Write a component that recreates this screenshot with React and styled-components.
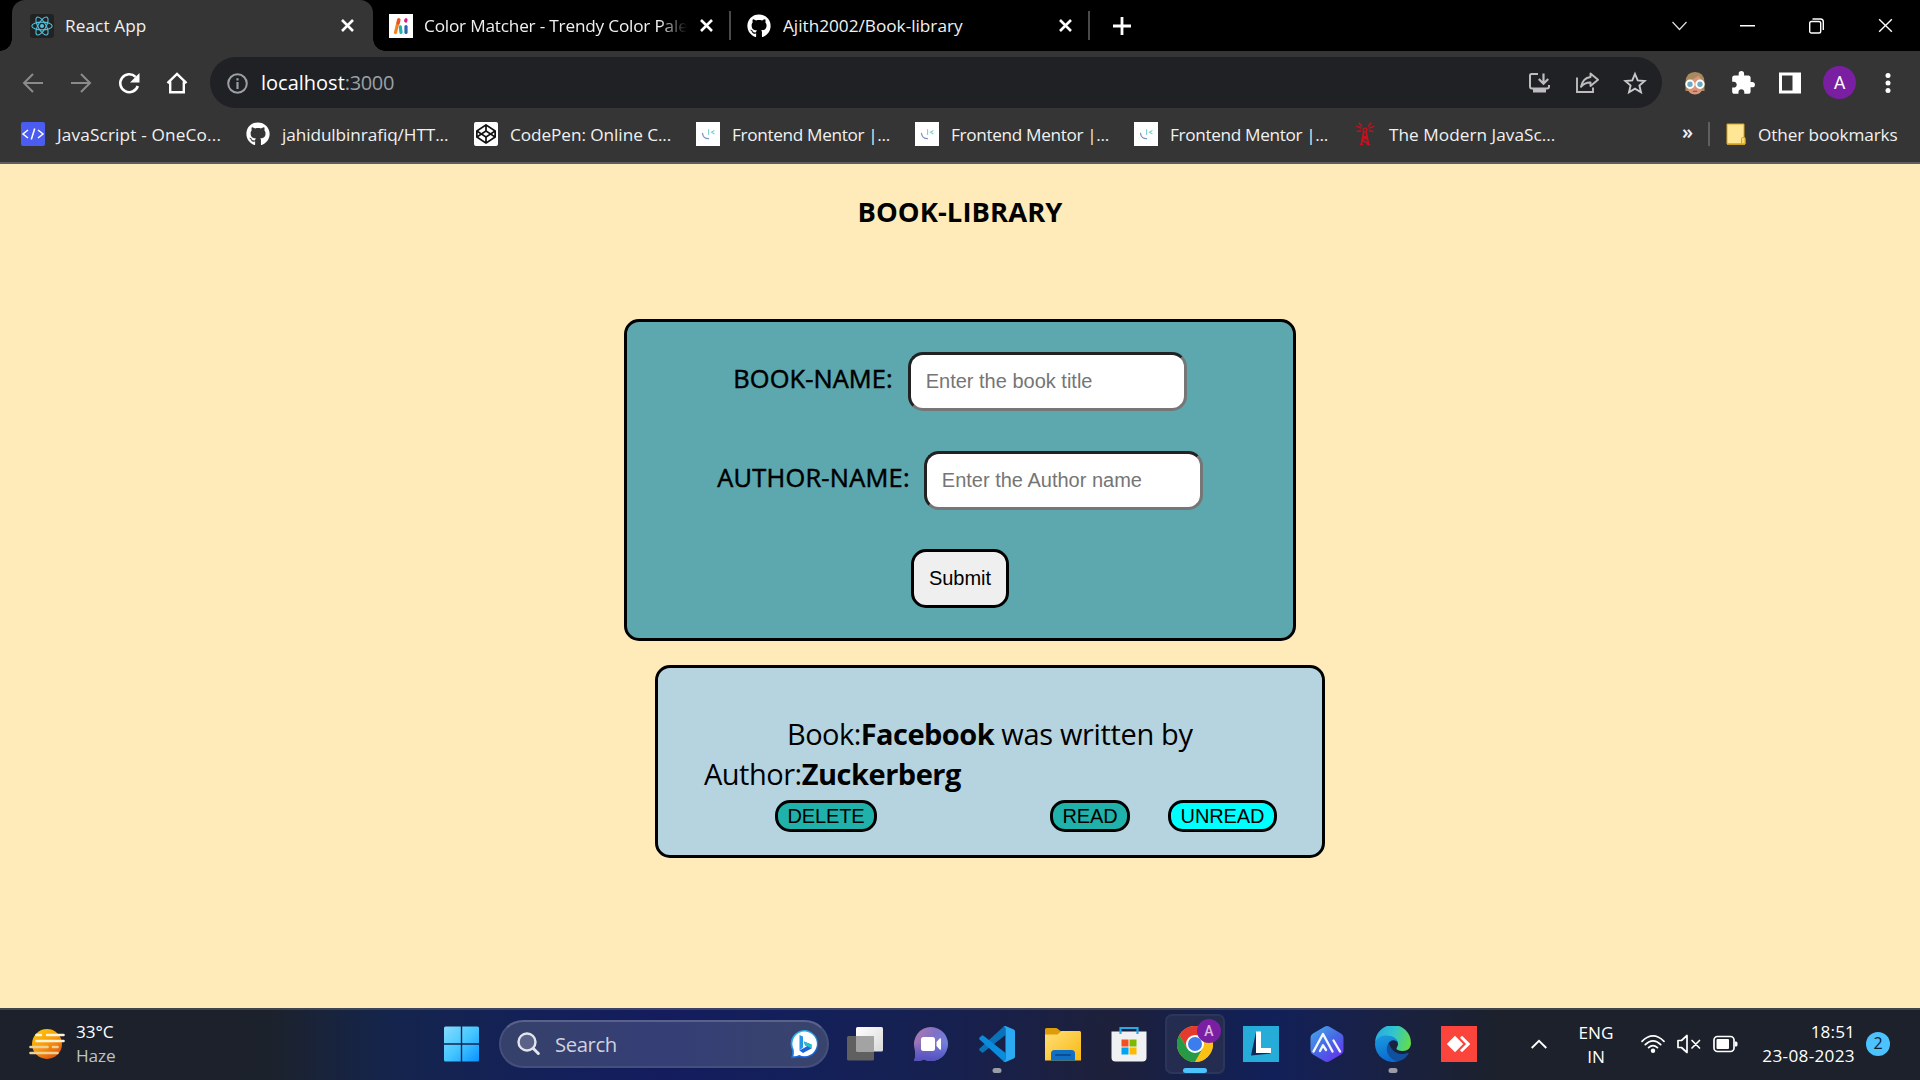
import React from "react";
import styled, { createGlobalStyle } from "styled-components";
import { FaGithub, FaCodepen } from "react-icons/fa";
import { MdExtension } from "react-icons/md";

const GlobalStyle = createGlobalStyle`
  * { box-sizing: border-box; }
  body {
    margin: 0;
    overflow: hidden;
    background: #ffeaba;
    font-family: "Open Sans", "Noto Sans", sans-serif;
  }
  svg { display: block; flex: none; }
`;

const Screen = styled.div`
  width: 1920px;
  height: 1080px;
  display: flex;
  flex-direction: column;
`;

const Label = styled.span`
  font-size: ${(p) => p.$size || 17.2}px;
  font-weight: ${(p) => p.$weight || 400};
  letter-spacing: ${(p) => p.$track || 0}px;
  line-height: 24px;
  white-space: nowrap;
  color: ${(p) => p.$color || "#f1f1f1"};
`;

/* ---------- browser: tab strip ---------- */

const TabStrip = styled.header`
  height: 51px;
  display: flex;
  align-items: center;
  background: #000;
  padding-left: 12px;
`;

const Tab = styled.div`
  position: relative;
  width: ${(p) => p.$width}px;
  height: 51px;
  display: flex;
  align-items: center;
  padding: 0 ${(p) => p.$right}px 0 ${(p) => p.$left}px;
  border-radius: 13px 13px 0 0;
  background: ${(p) => (p.$active ? "#353535" : "transparent")};

  &::before,
  &::after {
    content: "";
    display: ${(p) => (p.$active ? "block" : "none")};
    position: absolute;
    bottom: 0;
    width: 12px;
    height: 12px;
  }
  &::before {
    left: -12px;
    background: radial-gradient(circle at 0 0, transparent 11.5px, #353535 12px);
  }
  &::after {
    right: -12px;
    background: radial-gradient(circle at 100% 0, transparent 11.5px, #353535 12px);
  }
`;

const TabTitle = styled(Label)`
  flex: 1;
  min-width: 0;
  margin-left: ${(p) => p.$gap || 11}px;
  overflow: hidden;
  ${(p) => p.$fade && "mask-image: linear-gradient(90deg, #000 235px, transparent 263px);"}
`;

const Divider = styled.i`
  width: 2px;
  height: ${(p) => p.$height}px;
  background: ${(p) => p.$color || "#4a4a4a"};
`;

const NewTab = styled.button`
  width: 62px;
  height: 51px;
  padding: 0 0 0 22px;
  border: 0;
  background: none;
`;

const WindowControls = styled.div`
  margin-left: auto;
  height: 43px;
  display: flex;
  align-items: center;
  gap: 53.8px;
  padding-right: 27px;
`;

/* ---------- browser: toolbar ---------- */

const Toolbar = styled.div`
  height: 63px;
  display: flex;
  align-items: center;
  background: #353535;
`;

const NavButtons = styled.nav`
  width: 210px;
  display: flex;
  gap: 24px;
  padding-left: 21px;
`;

const Omnibox = styled.div`
  width: 1452px;
  height: 51px;
  display: flex;
  align-items: center;
  padding: 0 15px 0 15px;
  border-radius: 26px;
  background: #202124;
`;

const Url = styled.div`
  flex: 1;
  display: flex;
  margin-left: 12px;
`;

const OmniActions = styled.div`
  display: flex;
  gap: 24px;
`;

const Extensions = styled.div`
  display: flex;
  align-items: center;
  gap: 23px;
  padding-left: 21px;
`;

const Avatar = styled.div`
  width: 33px;
  height: 33px;
  margin: 0 -3px 0 -1px;
  border-radius: 50%;
  background: #7b1fa2;
  color: #fff;
  font: 400 18px/33px Roboto, sans-serif;
  text-align: center;
`;

/* ---------- browser: bookmarks ---------- */

const BookmarksBar = styled.div`
  height: 50px;
  display: flex;
  align-items: center;
  padding: 0 20px 8px 21px;
  background: #353535;
  border-bottom: 2px solid #5f5f5f;
`;

const Bookmark = styled.div`
  width: ${(p) => p.$width}px;
  display: flex;
  align-items: center;
  gap: 12px;
  padding-left: ${(p) => p.$inset || 0}px;
`;

const BookmarkName = styled(Label)`
  padding-top: 1px;
  line-height: 25px;
`;

const More = styled(Label)`
  margin: 0 15px 4px auto;
  font-weight: 600;
  font-size: 20px;
`;

/* ---------- page ---------- */

const Page = styled.main`
  height: 844px;
  display: flex;
  flex-direction: column;
  align-items: center;
  background: #ffeaba;
`;

const Title = styled.h1`
  margin: 28px 0 87px;
  font-size: 27.4px;
  line-height: 40px;
  font-weight: 700;
  letter-spacing: 0.08px;
  color: #000;
`;

const Form = styled.form`
  width: 672px;
  height: 322px;
  display: flex;
  flex-direction: column;
  align-items: center;
  gap: 40px;
  padding-top: 30px;
  border: 3px solid #000;
  border-radius: 15px;
  background: #5da7ae;
`;

const Field = styled.label`
  display: flex;
  align-items: center;
  gap: ${(p) => p.$gap}px;
`;

const FieldName = styled.span`
  padding-bottom: 8px;
  font-size: 25.4px;
  line-height: 34px;
  letter-spacing: ${(p) => p.$track}px;
  color: #000;
  -webkit-text-stroke: 0.5px #000;
`;

const Input = styled.input`
  width: 279px;
  height: 59px;
  padding: 0 15px;
  border: 3px solid;
  border-color: #222 #767676 #767676 #222;
  border-radius: 15px;
  background: #fff;
  font: 20px "Liberation Sans", Arial, sans-serif;
  outline: 0;
  &::placeholder { color: #757575; opacity: 1; }
`;

const Submit = styled.button`
  width: 98px;
  height: 59px;
  margin-top: -1px;
  padding: 0;
  border: 3px solid #000;
  border-radius: 15px;
  background: #efefef;
  color: #000;
  font: 20px "Liberation Sans", Arial, sans-serif;
`;

const Card = styled.section`
  width: 670px;
  height: 193px;
  margin: 24px 0 0 60px;
  padding: 46px 45px 0 46px;
  border: 3px solid #000;
  border-radius: 15px;
  background: #b6d4e0;
`;

const Sentence = styled.p`
  margin: 0;
  text-indent: ${(p) => p.$indent || 0}px;
  font-size: 29px;
  line-height: 40px;
  letter-spacing: ${(p) => p.$track}px;
  color: #000;
`;

const Run = styled.span`
  font-weight: ${(p) => p.$weight || 400};
  letter-spacing: ${(p) => p.$track}px;
`;

const CardActions = styled.div`
  display: flex;
  margin-top: 6px;
  padding-left: 71px;
`;

const Pill = styled.button`
  width: ${(p) => p.$width}px;
  height: 32px;
  margin-right: ${(p) => p.$after || 0}px;
  padding: 0;
  border: 3px solid #000;
  border-radius: 15px;
  background: ${(p) => p.$bg};
  color: #000;
  font: 20px/25px "Liberation Sans", Arial, sans-serif;
  letter-spacing: -0.1px;
`;

/* ---------- taskbar ---------- */

const Taskbar = styled.footer`
  height: 72px;
  display: flex;
  align-items: center;
  padding-bottom: 2px;
  border-top: 2px solid rgba(110, 110, 110, 0.45);
  background: linear-gradient(90deg, #1c212b 0, #1c222c 270px, #14244c 390px, #13205a 560px, #141c5e 660px,
    #13205a 800px, #17204e 960px, #1e203a 1110px, #15204e 1210px, #12205a 1270px, #1a2140 1400px, #1c212b 1500px);
  background-origin: border-box;
`;

const Weather = styled.div`
  width: 443px;
  display: flex;
  align-items: center;
  gap: 10px;
  padding-left: 29px;
`;

const Stack = styled.div`
  display: flex;
  flex-direction: column;
  align-items: ${(p) => p.$align || "flex-start"};
`;

const SearchBox = styled.div`
  width: 330px;
  height: 48px;
  display: flex;
  align-items: center;
  gap: 15px;
  margin: 0 6px 0 20px;
  padding: 0 7px 0 16px;
  border: 2px solid #454f7b;
  border-top-color: #5a628c;
  border-radius: 24px;
  background: linear-gradient(90deg, #35416a, #353e76 50%, #38446c);
`;

const SearchText = styled(Label)`
  flex: 1;
`;

const Apps = styled.div`
  display: flex;
  gap: 6px;
  margin-right: 42px;
`;

const AppSlot = styled.div`
  position: relative;
  width: 60px;
  height: 60px;
  display: grid;
  place-items: center;
  border-radius: 7px;
  border: 2px solid ${(p) => (p.$active ? "#2c355a" : "transparent")};
  background: ${(p) => (p.$active ? "#242c50" : "transparent")};

  &::after {
    content: "";
    display: ${(p) => (p.$running || p.$active ? "block" : "none")};
    position: absolute;
    left: 50%;
    bottom: -1px;
    width: ${(p) => (p.$active ? 24 : 9)}px;
    height: 5px;
    border-radius: 3px;
    transform: translateX(-50%);
    background: ${(p) => (p.$active ? "#4cc2ff" : "#9a9ca8")};
  }
`;

const ProfileBadge = styled.span`
  position: absolute;
  top: 3px;
  right: 2px;
  width: 24px;
  height: 24px;
  border-radius: 50%;
  background: #7b1fa2;
  color: #d9b8e4;
  font: 500 14px/25px Roboto, sans-serif;
  text-align: center;
`;

const Tray = styled.div`
  flex: 1;
  display: flex;
  align-items: center;
`;

const Language = styled(Stack)`
  width: 60px;
  margin: 0 15px 0 19px;
  padding-top: 1px;
`;

const Status = styled.div`
  display: flex;
  align-items: center;
  gap: 12px;
`;

const Clock = styled(Stack)`
  width: 104px;
  margin: 0 11px 0 13px;
`;

const Count = styled.div`
  width: 24px;
  height: 24px;
  border-radius: 50%;
  background: #4cc2ff;
  color: #10202c;
  font-size: 16px;
  line-height: 23px;
  text-align: center;
`;

/* ---------- icons ---------- */

const Close = ({ size = 13, w = 2.6, color = "#fff" }) => (
  <svg width={size} height={size} viewBox="0 0 13 13" stroke={color} strokeWidth={w} fill="none">
    <path d="M1 1 12 12M12 1 1 12" />
  </svg>
);

const ReactIcon = () => (
  <svg width="24" height="24" viewBox="0 0 24 24" fill="none" stroke="#53c1de" strokeWidth="1.1">
    <rect width="24" height="24" rx="3" fill="#222" stroke="none" />
    <ellipse cx="12" cy="12" rx="10.2" ry="3.9" />
    <ellipse cx="12" cy="12" rx="10.2" ry="3.9" transform="rotate(60 12 12)" />
    <ellipse cx="12" cy="12" rx="10.2" ry="3.9" transform="rotate(120 12 12)" />
    <circle cx="12" cy="12" r="2" fill="#53c1de" stroke="none" />
  </svg>
);

const MatcherIcon = () => (
  <svg width="24" height="24" viewBox="0 0 24 24" fill="none" strokeLinecap="round" strokeWidth="3.2">
    <rect width="24" height="24" fill="#fff" />
    <path d="M9.500 6 6.500 18.500" stroke="#f58220" />
    <path d="M10 5.800 9.200 9" stroke="#e8502f" />
    <path d="M11.300 12.800 12 18.500" stroke="#1fb5a8" />
    <path d="M17 12.500V18.500" stroke="#2d63b4" />
    <path d="M17 5.800 16.700 7" stroke="#e6197f" />
  </svg>
);

const CodeIcon = () => (
  <svg width="24" height="24" viewBox="0 0 24 24" fill="none" stroke="#fff" strokeWidth="1.5">
    <rect width="24" height="24" rx="2" fill="#4b5cf0" stroke="none" />
    <path d="M7 8 2 12l5 4M17 8l5 4-5 4M13.7 6.5l-3.4 11" />
  </svg>
);

const PenBox = styled.div`
  width: 24px;
  height: 24px;
  display: grid;
  place-items: center;
  flex: none;
  border-radius: 2px;
  background: #fff;
`;

const MentorIcon = () => (
  <svg width="24" height="24" viewBox="0 0 24 24" fill="none" strokeLinecap="round">
    <rect width="24" height="24" fill="#fff" />
    <path d="M6.5 11.5C7 14.7 9 16.7 12.5 16.7" stroke="#7d8fc9" strokeWidth="1.3" />
    <path d="M12.6 7.5v5M18 8.7l-2.5 1.6 2.5 1.5" stroke="#7ccfd2" strokeWidth="1.1" />
  </svg>
);

const TowerIcon = () => (
  <svg width="24" height="24" viewBox="-0.700 0 24 24" fill="none" stroke="#c8101f" strokeWidth="1.400">
    <path d="M10 10 7.500 22.500M12.500 10 15 22.500M9.500 14l4.200 3.500M13 14l-4.500 4M8.500 18l5.800 3.500M6 22.500h3.500M13 22.500h3.500" strokeWidth="1.700" />
    <circle cx="11.300" cy="8" r="1.900" />
    <path d="M8 6.300 2.500 4.200M8.200 4.500 5.200.8M14.500 4.500 17.500.8M15 6.300 20.500 4.200M7.500 8.800 3 9.500M15.200 8.800 19.500 9.500" />
  </svg>
);

const FolderMark = () => (
  <svg width="20" height="24" viewBox="0 0 20 24">
    <path d="M1 2h17v14l1 1v5H1z" fill="#ffe694" stroke="#d9a520" strokeWidth="1" />
    <path d="M15.5 22v-5.5q0-1 1-1h2.5V22z" fill="#ffd966" stroke="#d9a520" strokeWidth="1" />
    <path d="M1 22h18" stroke="#e0ac1c" strokeWidth="1.5" />
  </svg>
);

const NavIcons = () => (
  <NavButtons>
    <svg width="24" height="24" viewBox="0 0 24 24" fill="none" stroke="#8b8b8b" strokeWidth="2">
      <path d="M22 12H3.5M12 3 3 12l9 9" />
    </svg>
    <svg width="24" height="24" viewBox="0 0 24 24" fill="none" stroke="#8b8b8b" strokeWidth="2">
      <path d="M2 12h18.5M12 3l9 9-9 9" />
    </svg>
    <svg width="24" height="24" viewBox="0 0 24 24" fill="none" stroke="#fff" strokeWidth="2.6">
      <path d="M20.8 15A9 9 0 1 1 18.6 5.8" />
      <path d="M22.5 2v9.5H13z" fill="#fff" stroke="none" />
    </svg>
    <svg width="24" height="24" viewBox="0 0 24 24" fill="none" stroke="#fff" strokeWidth="2.4">
      <path d="M2.5 12.2 12 3l9.5 9.2M5.2 10.5V21.3h13.6V10.5" />
    </svg>
  </NavButtons>
);

const InfoIcon = () => (
  <svg width="24" height="24" viewBox="0 0 24 24" fill="none" stroke="#9aa0a6" strokeWidth="2">
    <circle cx="12.5" cy="12.5" r="9.3" />
    <path d="M12.5 11v7M12.5 7.2v2.3" strokeWidth="2.2" />
  </svg>
);

const InstallIcon = () => (
  <svg width="24" height="24" viewBox="0 0 24 24" fill="none" stroke="#bdbdbd" strokeWidth="2">
    <path d="M11 3H4.5Q3 3 3 4.500V15.5Q3 17.500 5 17.500H20Q22 17.500 22 15.500V14" />
    <path d="M16.500 2.500v9M11.800 8l4.700 4.700L21.200 8" strokeWidth="2.2" />
    <path d="M6 18h13v3.500H6z" fill="#bdbdbd" stroke="none" />
  </svg>
);

const ShareIcon = () => (
  <svg width="24" height="24" viewBox="0 0 24 24" fill="none" stroke="#bdbdbd" strokeWidth="1.9">
    <path d="M2 6.500V21H18V16.500" />
    <path d="M15.500 2.500 23 8.800 15.500 15V11.500C11 11.300 8.500 12.800 6 15.800 7 10.500 9.800 6.800 15.500 6z" strokeLinejoin="round" />
  </svg>
);

const StarIcon = () => (
  <svg width="24" height="24" viewBox="0 0 24 24" fill="none" stroke="#c9c9c9" strokeWidth="1.9">
    <path d="m12 3 2.700 6.400 6.900.6-5.200 4.500 1.600 6.800L12 17.700l-6 3.600 1.600-6.800L2.400 10l6.900-.6z" />
  </svg>
);

const FaceIcon = () => (
  <svg width="24" height="24" viewBox="0 0 24 24">
    <path d="M2.500 11Q3 1 12 1T21.500 11V20H2.500z" fill="#a98a5e" />
    <path d="M4.500 9.500q7-1 11-5 2 3.500 4 5v7q-1 7-7.500 7T4.500 16.500z" fill="#d9967a" />
    <circle cx="7" cy="13.300" r="3.700" fill="#6fa9bd" stroke="#fff" strokeWidth="2" />
    <circle cx="17" cy="13.300" r="3.700" fill="#6fa9bd" stroke="#fff" strokeWidth="2" />
    <path d="M9.800 20.300h4.400" stroke="#b94d44" strokeWidth="1.300" />
  </svg>
);

const SidePanelIcon = () => (
  <svg width="22" height="22" viewBox="0 0 22 22">
    <path fill="#fff" fillRule="evenodd" d="M0 .5h22v21H0zM3 3.500v15h10.500v-15z" />
  </svg>
);

const HazeIcon = () => (
  <svg width="37" height="32" viewBox="0 0 37 32">
    <defs>
      <linearGradient id="sun" x1="0" y1="0" x2="0.700" y2="1">
        <stop offset="0" stopColor="#ffcf0a" />
        <stop offset="0.550" stopColor="#f79a0c" />
        <stop offset="1" stopColor="#e2540f" />
      </linearGradient>
    </defs>
    <circle cx="18" cy="16" r="15" fill="url(#sun)" />
    <g stroke="#fff3d6" strokeWidth="2.600" strokeLinecap="round">
      <path d="M7.500 7H12M18 7H34.500M7.500 13H34.500" />
      <path d="M1.500 19H18.500M24 19H28.500M1.500 25H28.500" stroke="#ecd09a" />
    </g>
  </svg>
);

const WindowsLogo = () => (
  <svg width="36" height="36" viewBox="0 0 36 36">
    <defs>
      <linearGradient id="win" x1="0" y1="0" x2="1" y2="1">
        <stop offset="0" stopColor="#86dcfd" />
        <stop offset="0.500" stopColor="#45c8ff" />
        <stop offset="1" stopColor="#0a92ff" />
      </linearGradient>
    </defs>
    <path fill="url(#win)" d="M2.500.5H17.800V17.200H1V2Q1 .5 2.500 .5zM19.200.5H34.500Q36 .5 36 2V17.200H19.200zM1 18.700H17.800V35.500H2.500Q1 35.500 1 34zM19.200 18.700H36V34Q36 35.500 34.500 35.500H19.200z" />
  </svg>
);

const SearchIcon = () => (
  <svg width="23" height="24" viewBox="0 0 23 24" fill="none" stroke="#e3e5ec" strokeWidth="2.400" strokeLinecap="round">
    <circle cx="10" cy="10" r="8.500" fill="#5a6287" />
    <path d="m16.300 16.500 5 5" strokeWidth="3" />
  </svg>
);

const BingIcon = () => (
  <svg width="30" height="30" viewBox="0 0 30 30">
    <defs>
      <linearGradient id="bing" x1="0" y1="0" x2="0.400" y2="1">
        <stop offset="0" stopColor="#28c4ee" />
        <stop offset="1" stopColor="#1760dc" />
      </linearGradient>
    </defs>
    <path d="M15 1A14 14 0 1 1 9 28Q5 29.500 1 29 2.500 26 2.200 21.500A14 14 0 0 1 15 1z" fill="url(#bing)" />
    <path d="M15 2.600A12.300 12.300 0 1 1 9.300 26Q6 27.600 3.300 27.300 4.200 25 3.700 20.500A12.300 12.300 0 0 1 15 2.600z" fill="#fff" />
    <path d="M9.500 6 13 7.500V18.500L9.500 21.500z" fill="#2296e8" />
    <path d="M9.500 21.500 17 17.200l-2-1-1.200-3.700 7.700 3v4L13 24z" fill="#1f62df" />
    <path d="m13.800 12.500 7.700 3v4L17 17.200l-2-1z" fill="#25c2c4" />
  </svg>
);

const TaskViewIcon = () => (
  <svg width="36" height="36" viewBox="0 0 36 36">
    <defs>
      <linearGradient id="tv" x1="0" y1="0" x2="1" y2="1">
        <stop offset="0" stopColor="#fff" />
        <stop offset="1" stopColor="#d9d9d9" />
      </linearGradient>
    </defs>
    <rect x="0" y="10" width="27" height="24.500" rx="1.500" fill="#606060" />
    <rect x="9" y="1" width="27" height="24.500" rx="1.500" fill="url(#tv)" />
    <path d="M9 10H27V25.500H10.500Q9 25.500 9 24z" fill="#a3a3a3" />
  </svg>
);

const ChatIcon = () => (
  <svg width="36" height="36" viewBox="0 0 36 36">
    <defs>
      <linearGradient id="chat" x1="0" y1="0.100" x2="1" y2="0.700">
        <stop offset="0" stopColor="#b07aa8" />
        <stop offset="0.500" stopColor="#7f70c8" />
        <stop offset="1" stopColor="#6d87e4" />
      </linearGradient>
      <linearGradient id="chat2" x1="0" y1="0" x2="0" y2="1">
        <stop offset="0.450" stopColor="#5450bf" stopOpacity="0" />
        <stop offset="1" stopColor="#5450bf" />
      </linearGradient>
    </defs>
    {["url(#chat)", "url(#chat2)"].map((f) => (
      <path key={f} d="M18 1A17 17 0 1 1 11 33.500Q7 35.300 1 35 3 31 1.700 23A17 17 0 0 1 18 1z" fill={f} />
    ))}
    <rect x="8" y="11" width="14" height="14" rx="2.500" fill="#fff" />
    <path d="m23.500 16 3.200-3.500q1.300-.8 1.300.5v10q0 1.300-1.300.5L23.500 20z" fill="#fff" />
  </svg>
);

const CodeEditorIcon = () => (
  <svg width="36" height="36" viewBox="0 0 36 36">
    <path d="M26.500 9 4.500 26.300Q3.500 27 2.600 26.200L.6 24.400Q-.3 23.500.6 22.600L24.500.8 26.500 0z" fill="#0a72b8" />
    <path d="M26.500 27 4.500 9.700Q3.500 9 2.600 9.800L.6 11.600Q-.3 12.500.6 13.400L24.500 35.200 26.500 36z" fill="#0b8bdb" />
    <path d="M26.500 0 34.800 3.500Q36 4 36 5.500V30.500Q36 32 34.800 32.500L26.500 36Q25 36 24 34.800 26.500 36 26.500 33V3Q26.500 0 24 1.200 25 0 26.500 0z" fill="#2ba9f3" />
  </svg>
);

const ExplorerIcon = () => (
  <svg width="36" height="36" viewBox="0 0 36 36">
    <defs>
      <linearGradient id="fold" x1="0" y1="0" x2="1" y2="1">
        <stop offset="0" stopColor="#ffdf7a" />
        <stop offset="1" stopColor="#f9b90f" />
      </linearGradient>
    </defs>
    <path d="M0 3.500Q0 2 1.500 2H11Q12 2 13 3l2.500 2H34.500V12H0z" fill="#dd9c08" />
    <path d="M0 8.500H12.500L16.500 5H34.500Q36 5 36 6.500V34.500H0z" fill="url(#fold)" />
    <path d="M6 34.500V27.500Q6 24 9.500 24H26.500Q30 24 30 27.500V34.500z" fill="#0f6fc4" />
    <path d="M11 29H25" stroke="#0b4d8f" strokeWidth="2" strokeLinecap="round" />
  </svg>
);

const StoreIcon = () => (
  <svg width="36" height="36" viewBox="0 0 36 36">
    <path d="M.5 5.500H35.500V31.500Q35.500 35.500 31.500 35.500H4.500Q.5 35.500.5 31.500z" fill="#f0f1f2" />
    <path d="M9.500 8V2H26.500V8" fill="none" stroke="#27a9e6" strokeWidth="2.200" />
    <path d="M10.500 13.500h7v7h-7z" fill="#f25022" />
    <path d="M18.500 13.500h7v7h-7z" fill="#7fba00" />
    <path d="M10.500 21.500h7v7h-7z" fill="#00a4ef" />
    <path d="M18.500 21.500h7v7h-7z" fill="#ffb900" />
  </svg>
);

const ChromeIcon = () => (
  <svg width="36" height="36" viewBox="0 0 36 36">
    <circle cx="18" cy="18" r="18" fill="#fbc116" />
    <path d="M2.400 9A18 18 0 0 1 33.600 9L18 9.500 10 22z" fill="#e33b2e" />
    <path d="M2.400 9A18 18 0 0 0 18 36L25.800 22.500 18 26.500 10.200 22.500z" fill="#269a46" />
    <path d="M18 9H33.600A18 18 0 0 1 18 36L25.800 22.500z" fill="#fbc116" />
    <circle cx="18" cy="18" r="9" fill="#fff" />
    <circle cx="18" cy="18" r="7" fill="#3b7ded" />
  </svg>
);

const LIcon = () => (
  <svg width="36" height="36" viewBox="0 0 36 36">
    <rect width="36" height="36" fill="#26acd9" />
    <path d="M13 6 8 29.500 28 27.500 14 24z" fill="#0b2a5c" />
    <path d="M13 5.500h5V22H28v5H13z" fill="#fff" />
  </svg>
);

const HexIcon = () => (
  <svg width="36" height="36" viewBox="0 0 36 36">
    <defs>
      <linearGradient id="hex" x1="0.100" y1="0" x2="0.900" y2="1">
        <stop offset="0" stopColor="#47a6e8" />
        <stop offset="0.500" stopColor="#4668e6" />
        <stop offset="1" stopColor="#6a2df0" />
      </linearGradient>
    </defs>
    <path d="M15.500.8Q18-.6 20.500.8L32 7.400Q34.500 8.800 34.500 11.500V24.500Q34.500 27.200 32 28.600L20.500 35.200Q18 36.600 15.500 35.200L4 28.600Q1.500 27.200 1.500 24.500V11.500Q1.500 8.800 4 7.400z" fill="url(#hex)" />
    <path d="M4.500 25.500 14 8 23.500 25.500M11 25 14 19.300 17 24M24.500 14.500 31 25.500" fill="none" stroke="#f4f6ff" strokeWidth="2.400" strokeLinecap="round" strokeLinejoin="round" />
  </svg>
);

const EdgeIcon = () => (
  <svg width="36" height="36" viewBox="0 0 36 36">
    <defs>
      <linearGradient id="e1" x1="0" y1="0.300" x2="1" y2="0.500">
        <stop offset="0" stopColor="#28a9e0" />
        <stop offset="0.500" stopColor="#31c5cf" />
        <stop offset="1" stopColor="#62dc4c" />
      </linearGradient>
      <linearGradient id="e2" x1="0" y1="0" x2="0.300" y2="1">
        <stop offset="0" stopColor="#1b9de0" />
        <stop offset="1" stopColor="#0b6bd0" />
      </linearGradient>
    </defs>
    <path d="M0 17A18 18 0 0 1 36 17C36 22 32.500 25 28 25 24 25 21.500 23.800 21.500 22.500 21.500 21.500 23 20.500 23 17.800 23 14 18.500 10.500 12 10.500 5 10.500 1 14 0 17z" fill="url(#e1)" />
    <path d="M0 17.500C1 12 6 9.500 11.500 9.500 18 9.500 22.500 13 22.800 16.500 21 14 17.500 13.500 15 15.500 12 18 12 24 15 29 17 32.500 20 35 24 34.900A18 18 0 0 1 0 17.500z" fill="url(#e2)" />
    <path d="M14 17C9 23 13 33 22.500 35.300 28 34.500 32 31 33.500 27.500 33.500 26.500 33 26.600 32.500 27 26 30 16.500 27 14 17z" fill="#10509e" />
  </svg>
);

const DeskIcon = () => (
  <svg width="36" height="36" viewBox="0 0 36 36">
    <rect width="36" height="36" fill="#fb443b" />
    <path d="m14 9.800 8.200 8.200-8.200 8.200L5.800 18z" fill="#fff" />
    <path d="m20 10.800 7.200 7.200L20 25.200" fill="none" stroke="#fff" strokeWidth="3" />
  </svg>
);

const WifiIcon = () => (
  <svg width="24" height="20" viewBox="0 0 24 20" fill="none" stroke="#fff" strokeWidth="1.700" strokeLinecap="round">
    <path d="M1 7.300Q12-3.500 23 7.300M4.300 10.700Q12 3.200 19.700 10.700M7.600 13.700Q12 9.500 16.400 13.700" />
    <circle cx="12" cy="16.700" r="2.200" fill="#fff" stroke="none" />
  </svg>
);

const MuteIcon = () => (
  <svg width="24" height="20" viewBox="0 0 24 20" fill="none" stroke="#fff" strokeWidth="1.700" strokeLinejoin="round" strokeLinecap="round">
    <path d="M1 6.500h3.500L10 1.500v17L4.500 13.500H1zM15 6.500l7.500 7.500M22.500 6.500 15 14" />
  </svg>
);

const BatteryIcon = () => (
  <svg width="25" height="18" viewBox="0 0 25 18">
    <rect x="1" y="1.500" width="20" height="15" rx="3.500" fill="none" stroke="#fff" strokeWidth="1.700" />
    <rect x="3.500" y="4" width="12.500" height="10" rx="1" fill="#fff" />
    <path d="M22 6.500h1q1.500 0 1.500 1.500v2q0 1.500-1.500 1.500h-1z" fill="#fff" />
  </svg>
);

/* ---------- data ---------- */

const bookmarks = [
  { text: "JavaScript - OneCo...", width: 225, track: 0.16, icon: <CodeIcon /> },
  { text: "jahidulbinrafiq/HTT...", width: 228, track: -0.08, icon: <FaGithub size={24} color="#fff" /> },
  { text: "CodePen: Online C...", width: 222, track: -0.06, icon: <PenBox><FaCodepen size={20} color="#111" /></PenBox> },
  { text: "Frontend Mentor |...", width: 219, track: -0.34, icon: <MentorIcon /> },
  { text: "Frontend Mentor |...", width: 219, track: -0.34, icon: <MentorIcon /> },
  { text: "Frontend Mentor |...", width: 219, track: -0.34, icon: <MentorIcon /> },
  { text: "The Modern JavaSc...", width: 230, track: 0.04, icon: <TowerIcon /> },
];

const apps = [
  { name: "tasks", icon: <TaskViewIcon /> },
  { name: "chat", icon: <ChatIcon /> },
  { name: "editor", icon: <CodeEditorIcon />, running: true },
  { name: "files", icon: <ExplorerIcon /> },
  { name: "store", icon: <StoreIcon /> },
  { name: "chrome", icon: <ChromeIcon />, active: true, badge: "A" },
  { name: "l", icon: <LIcon /> },
  { name: "hex", icon: <HexIcon /> },
  { name: "edge", icon: <EdgeIcon />, running: true },
  { name: "desk", icon: <DeskIcon /> },
];

export default function App() {
  return (
    <Screen>
      <GlobalStyle />
      <TabStrip>
        <Tab $active $width={361} $left={18} $right={19}>
          <ReactIcon />
          <TabTitle $track={0.1}>React App</TabTitle>
          <Close />
        </Tab>
        <Tab $width={356} $left={16} $right={16}>
          <MatcherIcon />
          <TabTitle $track={-0.19} $fade>Color Matcher - Trendy Color Pale</TabTitle>
          <Close />
        </Tab>
        <Divider $height={29} />
        <Tab $width={357} $left={16} $right={16}>
          <FaGithub size={24} color="#fff" />
          <TabTitle $gap={12}>Ajith2002/Book-library</TabTitle>
          <Close />
        </Tab>
        <Divider $height={29} />
        <NewTab>
          <svg width="20" height="20" viewBox="0 0 20 20" stroke="#fff" strokeWidth="2.8">
            <path d="M10 1v18M1 10h18" />
          </svg>
        </NewTab>
        <WindowControls>
          <svg width="15" height="10" viewBox="0 0 15 10" fill="none" stroke="#ddd" strokeWidth="1.2">
            <path d="M.5 1 7.500 8.500 14.500 1" />
          </svg>
          <svg width="15" height="2" viewBox="0 0 15 2"><path d="M0 0h15v1.500H0z" fill="#fff" /></svg>
          <svg width="15" height="16" viewBox="0 0 15 16" fill="none" stroke="#fff" strokeWidth="1.4">
            <rect x="0.700" y="3.500" width="11" height="11.500" rx="1.800" />
            <path d="M3.500 1H11.500Q14.300 1 14.300 4V12" />
          </svg>
          <Close size={15} w={1.2} />
        </WindowControls>
      </TabStrip>

      <Toolbar>
        <NavIcons />
        <Omnibox>
          <InfoIcon />
          <Url>
            <Label $size={20} $color="#fff">localhost</Label>
            <Label $size={20} $color="#9aa0a6" $track={-0.35}>:3000</Label>
          </Url>
          <OmniActions>
            <InstallIcon />
            <ShareIcon />
            <StarIcon />
          </OmniActions>
        </Omnibox>
        <Extensions>
          <FaceIcon />
          <MdExtension size={26} color="#fff" />
          <SidePanelIcon />
          <Avatar>A</Avatar>
          <svg width="24" height="24" viewBox="0 0 24 24" fill="#fff">
            <circle cx="12" cy="4.500" r="2.500" />
            <circle cx="12" cy="12" r="2.500" />
            <circle cx="12" cy="19.500" r="2.500" />
          </svg>
        </Extensions>
      </Toolbar>

      <BookmarksBar>
        {bookmarks.map((b, i) => (
          <Bookmark key={i} $width={b.width}>
            {b.icon}
            <BookmarkName $track={b.track}>{b.text}</BookmarkName>
          </Bookmark>
        ))}
        <More>»</More>
        <Divider $height={24} $color="#5f5f5f" />
        <Bookmark $width={190} $inset={16}>
          <FolderMark />
          <BookmarkName $track={-0.1}>Other bookmarks</BookmarkName>
        </Bookmark>
      </BookmarksBar>

      <Page>
        <Title>BOOK-LIBRARY</Title>
        <Form onSubmit={(e) => e.preventDefault()}>
          <Field $gap={15}>
            <FieldName $track={0.1}>BOOK-NAME:</FieldName>
            <Input placeholder="Enter the book title" />
          </Field>
          <Field $gap={14}>
            <FieldName $track={0.25}>AUTHOR-NAME:</FieldName>
            <Input placeholder="Enter the Author name" />
          </Field>
          <Submit type="submit">Submit</Submit>
        </Form>
        <Card>
          <Sentence $indent={83} $track={-0.34}>
            <Run $track={-0.55}>Book:</Run>
            <Run as="b" $weight={700} $track={-0.54}>Facebook</Run> was written by
          </Sentence>
          <Sentence $track={-0.5}>
            Author:<Run as="b" $weight={700} $track={-0.48}>Zuckerberg</Run>
          </Sentence>
          <CardActions>
            <Pill $width={102} $after={173} $bg="#20b2aa">DELETE</Pill>
            <Pill $width={80} $after={38} $bg="#20b2aa">READ</Pill>
            <Pill $width={109} $bg="#00ffff">UNREAD</Pill>
          </CardActions>
        </Card>
      </Page>

      <Taskbar>
        <Weather>
          <HazeIcon />
          <Stack>
            <Label $track={-0.1} $color="#fff">33°C</Label>
            <Label $track={-0.1} $color="#bfc1c5">Haze</Label>
          </Stack>
        </Weather>
        <WindowsLogo />
        <SearchBox>
          <SearchIcon />
          <SearchText $size={20.3} $track={-0.4} $color="#cfd2df">Search</SearchText>
          <BingIcon />
        </SearchBox>
        <Apps>
          {apps.map((a) => (
            <AppSlot key={a.name} $active={a.active} $running={a.running}>
              {a.icon}
              {a.badge && <ProfileBadge>{a.badge}</ProfileBadge>}
            </AppSlot>
          ))}
        </Apps>
        <Tray>
          <svg width="16" height="10" viewBox="0 0 16 10" fill="none" stroke="#fff" strokeWidth="1.900">
            <path d="M.7 9 8 1.800 15.300 9" />
          </svg>
          <Language $align="center">
            <Label $color="#fff">ENG</Label>
            <Label $color="#fff">IN</Label>
          </Language>
          <Status>
            <WifiIcon />
            <MuteIcon />
            <BatteryIcon />
          </Status>
          <Clock $align="flex-end">
            <Label $color="#fff" $track={0.1}>18:51</Label>
            <Label $color="#fff" $track={0.3}>23-08-2023</Label>
          </Clock>
          <Count>2</Count>
        </Tray>
      </Taskbar>
    </Screen>
  );
}
